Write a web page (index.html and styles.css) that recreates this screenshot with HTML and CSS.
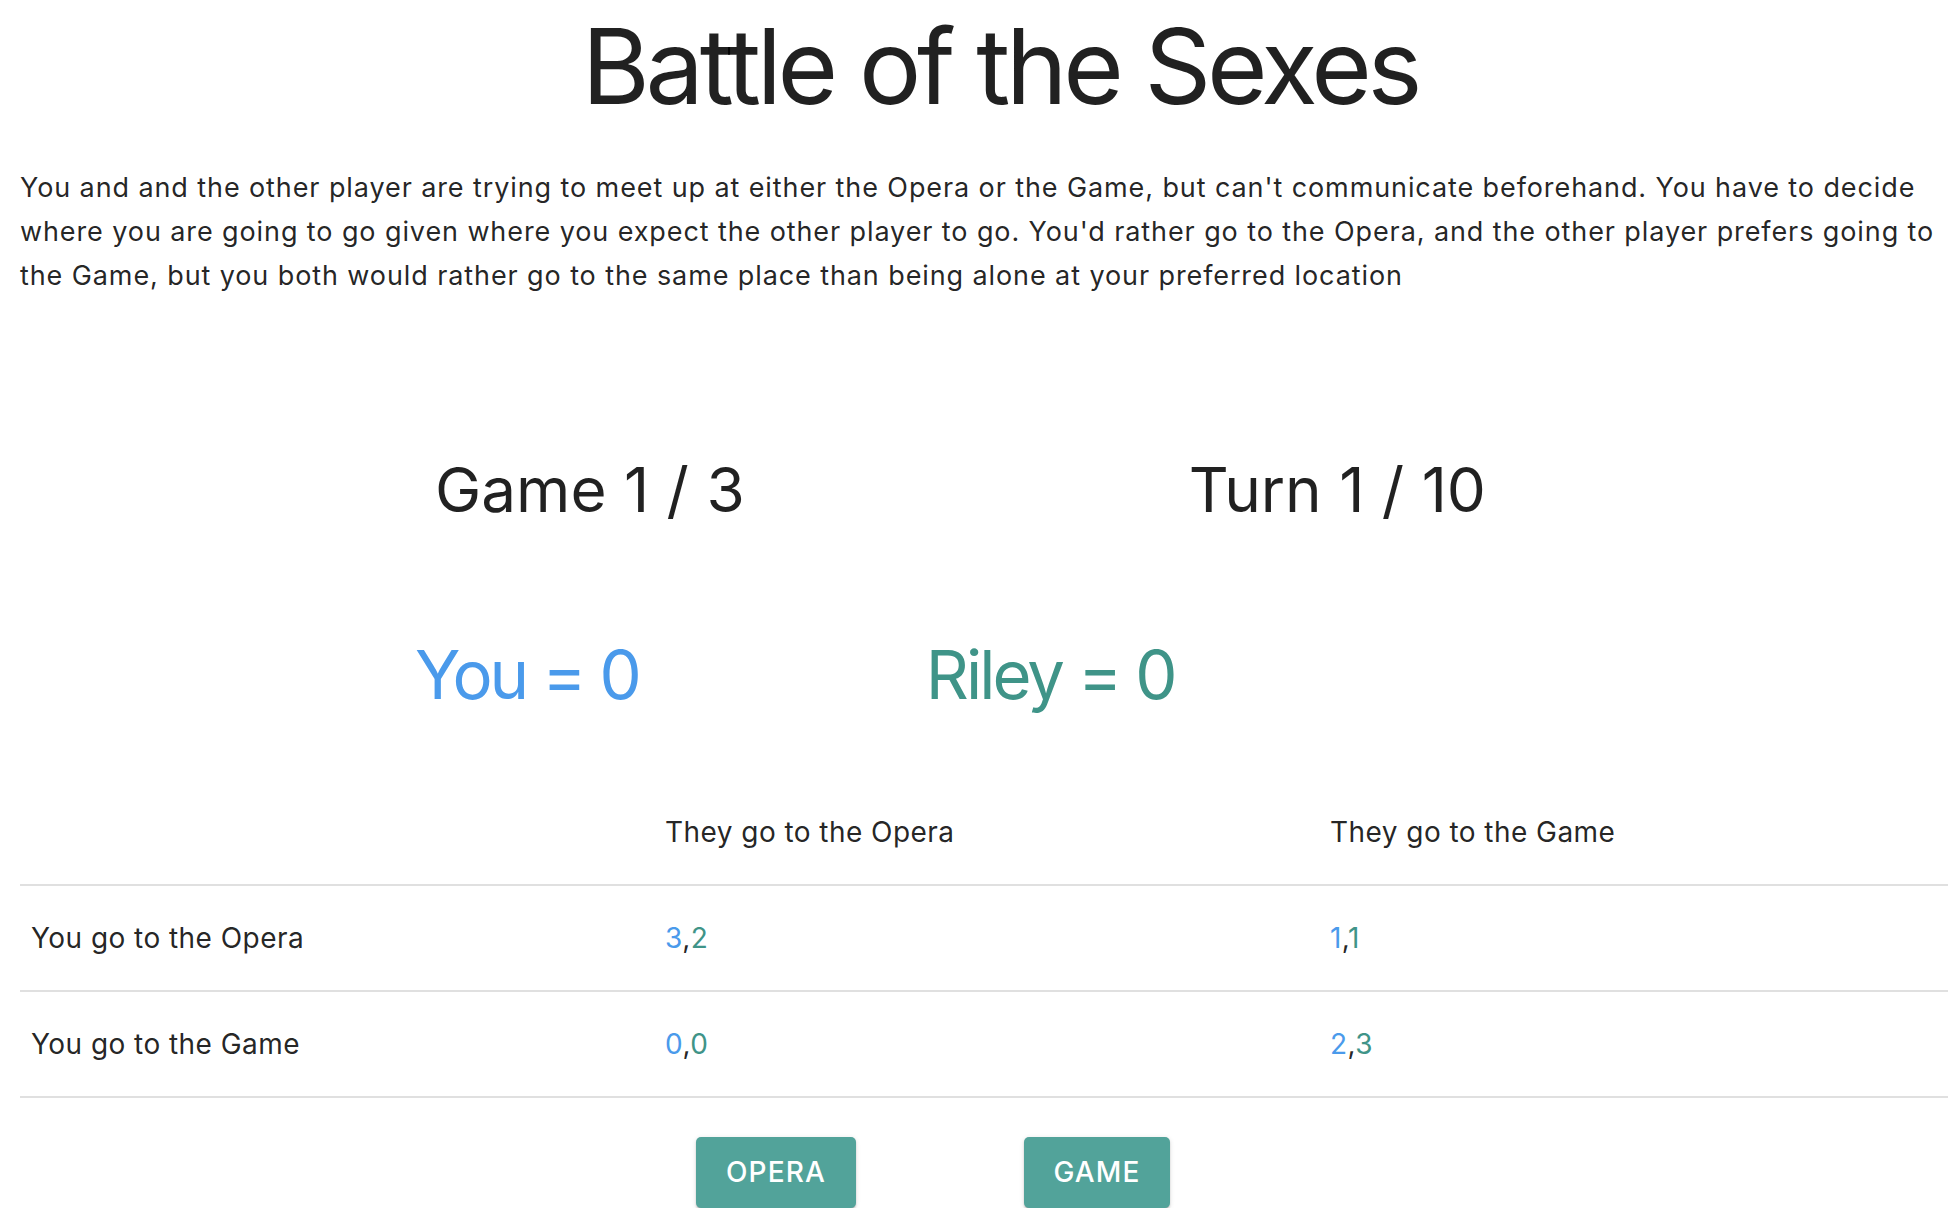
FILE: index.html
```html
<!DOCTYPE html>
<html lang="en">
<head>
<meta charset="utf-8">
<title>Battle of the Sexes</title>
<link rel="stylesheet" href="styles.css">
</head>
<body>
<main class="page">
  <h1 class="title">Battle of the Sexes</h1>
  <p class="intro">You and and the other player are trying to meet up at either the Opera or the Game, but can't communicate beforehand. You have to decide where you are going to go given where you expect the other player to go. You'd rather go to the Opera, and the other player prefers going to the Game, but you both would rather go to the same place than being alone at your preferred location</p>

  <div class="round">
    <div class="round-item">Game 1 / 3</div>
    <div class="round-item">Turn 1 / 10</div>
  </div>

  <div class="scores">
    <div class="score you">You = 0</div>
    <div class="score riley">Riley = 0</div>
  </div>

  <table class="matrix">
    <colgroup>
      <col class="c1">
      <col class="c2">
      <col class="c3">
    </colgroup>
    <thead>
      <tr><th></th><th>They go to the Opera</th><th>They go to the Game</th></tr>
    </thead>
    <tbody>
      <tr><td>You go to the Opera</td><td><span class="you">3</span>,<span class="riley">2</span></td><td><span class="you">1</span>,<span class="riley">1</span></td></tr>
      <tr><td>You go to the Game</td><td><span class="you">0</span>,<span class="riley">0</span></td><td><span class="you">2</span>,<span class="riley">3</span></td></tr>
    </tbody>
  </table>

  <div class="actions">
    <button class="btn btn-opera">OPERA</button>
    <button class="btn btn-game">GAME</button>
  </div>
</main>
</body>
</html>
```

FILE: styles.css
```css
html, body {
  margin: 0;
  padding: 0;
  background: #ffffff;
  overflow: hidden;
}
body {
  font-family: Inter, "Liberation Sans", sans-serif;
  color: rgba(0, 0, 0, 0.87);
}
.page {
  width: 1960px;
  margin-left: 20px;
  padding-top: 4px;
}
.title {
  margin: 0;
  font-size: 104px;
  line-height: 1.2;
  font-weight: 400;
  text-align: center;
  letter-spacing: -0.041em;
}
.intro {
  margin: 37px 0 0 0;
  width: 1922px;
  font-size: 27px;
  line-height: 44px;
  font-weight: 400;
  letter-spacing: 0.9px;
}
.round {
  margin-top: 155px;
  display: flex;
  gap: 444px;
  padding-left: 415px;
}
.round-item {
  font-size: 62px;
  line-height: 1.2;
  font-weight: 400;
}
.scores {
  margin-top: 108px;
  display: flex;
  gap: 287px;
  padding-left: 395px;
}
.score {
  font-size: 67px;
  line-height: 1.2;
  font-weight: 400;
  letter-spacing: -0.044em;
}
.you { color: #4a9aeb; }
.riley { color: #3f9488; }
.matrix {
  margin-top: 64px;
  width: 1960px;
  border-collapse: collapse;
  table-layout: fixed;
}
.matrix .c1 { width: 634px; }
.matrix .c2 { width: 665px; }
.matrix th,
.matrix td {
  height: 101px;
  padding: 3px 0 0 11px;
  border-bottom: 2px solid #e0e0e0;
  text-align: left;
  vertical-align: middle;
  font-size: 28px;
  font-weight: 400;
  line-height: 1.4;
  letter-spacing: 0.45px;
  color: rgba(0, 0, 0, 0.87);
}
.matrix td .you { color: #4a9aeb; }
.matrix td .riley { color: #3f9488; }
.actions {
  margin-top: 39px;
  display: flex;
  gap: 168px;
  padding-left: 676px;
}
.btn {
  height: 71px;
  padding: 0;
  border: none;
  border-radius: 5px;
  background: #52a39a;
  color: #ffffff;
  font-family: Inter, "Liberation Sans", sans-serif;
  font-size: 28px;
  font-weight: 500;
  letter-spacing: 0.04em;
  box-shadow: 0 3px 1px -2px rgba(0,0,0,0.2), 0 2px 2px 0 rgba(0,0,0,0.14), 0 1px 5px 0 rgba(0,0,0,0.12);
}
.btn-opera { width: 160px; }
.btn-game { width: 146px; }
```
